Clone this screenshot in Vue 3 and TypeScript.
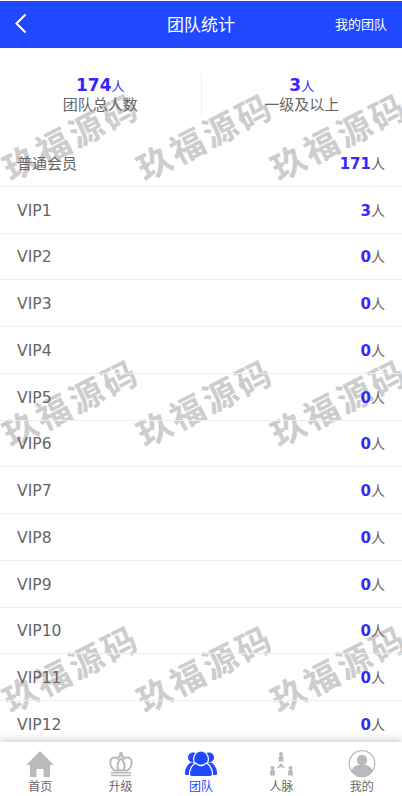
<template>
  <div class="page">
    <header class="top">
      <svg class="back" width="14" height="22" viewBox="0 0 14 22"><path d="M11.5 1.5 L2.5 10.5 L11.5 19.5" fill="none" stroke="#fff" stroke-width="2" /></svg>
      <span class="title">团队统计</span>
      <span class="link">我的团队</span>
    </header>

    <main class="body">
      <div class="marks">
        <span v-for="n in 9" :key="n" class="mark">玖福源码</span>
      </div>

      <section class="summary">
        <div class="cell">
          <div class="num"><b>174</b><i>人</i></div>
          <p>团队总人数</p>
        </div>
        <div class="cell">
          <div class="num"><b>3</b><i>人</i></div>
          <p>一级及以上</p>
        </div>
      </section>

      <ul class="rows">
        <li v-for="row in rows" :key="row.name">
          <span :class="{ vip: row.name.startsWith('VIP') }">{{ row.name }}</span>
          <span><b>{{ row.count }}</b><i>人</i></span>
        </li>
      </ul>
    </main>

    <nav class="tabs">
      <a v-for="tab in tabs" :key="tab.name" :class="{ on: tab.name === '团队' }">
        <svg width="42" height="32" viewBox="0 0 42 32" v-html="tab.icon"></svg>
        <span>{{ tab.name }}</span>
      </a>
    </nav>
  </div>
</template>

<script setup lang="ts">
const rows = [
  { name: "普通会员", count: 171 },
  { name: "VIP1", count: 3 },
  ...Array.from({ length: 11 }, (_, i) => ({ name: `VIP${i + 2}`, count: 0 })),
];

const person = (x: number, y: number) =>
  `<circle cx="${x}" cy="${y}" r="2"/><path d="M${x - 2.4} ${y + 7.5}v-4q0-1.6 1.6-1.6h1.6q1.6 0 1.6 1.6v4z"/>`;

const tabs = [
  {
    name: "首页",
    icon: `<path fill="#b9b9b9" d="M21 2 L34 15 L34 16 L31 16 L31 28 L24.5 28 L24.5 20 L17.5 20 L17.5 28 L11 28 L11 16 L8 16 L8 15 Z"/>`,
  },
  {
    name: "升级",
    icon: `<g fill="none" stroke="#b9b9b9" stroke-width="2"><path d="M14.5 21.5 C9 17 9 9.5 14 8.5 C16 8.2 17.5 9 18 9.5 C19 7.5 20 6.5 21 6 C22 6.5 23 7.5 24 9.5 C24.5 9 26 8.2 28 8.5 C33 9.5 33 17 27.5 21.5 Z"/><path d="M21 9.5 C17 12.5 17 18 18.5 21.5 M21 9.5 C25 12.5 25 18 23.5 21.5"/></g><circle cx="21" cy="4.6" r="1.9" fill="#b9b9b9"/><path fill="#b9b9b9" d="M11 23h20v1.5H11zM11 25.8h20v1.5H11z"/>`,
  },
  {
    name: "团队",
    icon: `<g fill="#2049ff"><circle cx="13" cy="8.5" r="5"/><path d="M6 26 Q4.5 26 5 23 Q6 16 11 13.5 L17 14 L14 26 Z"/><circle cx="29" cy="8.5" r="5"/><path d="M36 26 Q37.5 26 37 23 Q36 16 31 13.5 L25 14 L28 26 Z"/><g stroke="#fff" stroke-width="1.2"><ellipse cx="21" cy="10" rx="7.4" ry="8"/><path d="M12 27.5 Q9 27.5 9.5 24 Q10.5 17 15.5 14 Q21 19 26.5 14 Q31.5 17 32.5 24 Q33 27.5 30 27.5 Z"/></g></g>`,
  },
  {
    name: "人脉",
    icon: `<g fill="#b9b9b9">${person(21, 5)}${person(12.5, 19)}${person(30.5, 19)}<path d="M21 14 L25.5 19.5 L21 18 L16.5 19.5Z"/></g>`,
  },
  {
    name: "我的",
    icon: `<circle cx="21" cy="14.5" r="12.8" fill="none" stroke="#b9b9b9" stroke-width="1.3"/><circle cx="21" cy="11" r="5.2" fill="#b9b9b9"/><path fill="#b9b9b9" d="M10.5 22.5 q1-5.5 7-6.5 h7 q6 1 7 6.5 a12.2 12.2 0 0 1 -21 0z"/>`,
  },
];
</script>

<style scoped>
.page {
  width: 402px;
  height: 796px;
  display: flex;
  flex-direction: column;
  overflow: hidden;
  background: #fff;
  font-family: "DejaVu Sans", "Noto Sans CJK SC", sans-serif;
  color: #666;
}

.top {
  box-sizing: border-box;
  height: 47px;
  margin-top: 1px;
  flex: none;
  display: flex;
  align-items: center;
  justify-content: space-between;
  padding: 0 15px 2px 14px;
  background: #2049ff;
  color: #fff;
  position: relative;
}

.title {
  position: absolute;
  left: 0;
  right: 0;
  text-align: center;
  font-size: 17px;
}

.link {
  font-size: 13px;
  position: relative;
}

.body {
  flex: 1;
  min-height: 0;
  position: relative;
  overflow: hidden;
}

/* 水印 */
.marks {
  position: absolute;
  left: 3px;
  top: -46px;
  width: 402px;
  display: grid;
  grid-template-columns: repeat(3, 134px);
  grid-template-rows: repeat(3, 266px);
  pointer-events: none;
}

.mark {
  display: flex;
  align-items: center;
  justify-content: center;
  white-space: nowrap;
  font-size: 34px;
  font-weight: 700;
  letter-spacing: 3px;
  color: #cdcdcd;
  transform: rotate(-27deg);
}

.summary {
  position: relative;
  display: flex;
  padding-top: 25px;
}

.cell {
  box-sizing: border-box;
  flex: 1;
  height: 42px;
  text-align: center;
  font-size: 14px;
  line-height: 20px;
}

.cell + .cell {
  border-left: 1px solid #eee;
}

.cell .num {
  height: 20px;
  padding-top: 2px;
}

.cell p {
  margin: 0;
  font-size: 15px;
}

b {
  font-weight: 700;
  color: #3826ff;
}

.cell b {
  font-size: 17px;
}

i {
  font-style: normal;
}

.cell i {
  color: #3826ff;
  font-size: 13px;
}

.rows {
  position: relative;
  list-style: none;
  margin: 25px 0 0;
  padding: 0;
}

.rows li {
  height: 45.75px;
  border-bottom: 1px solid #eee;
  display: flex;
  align-items: center;
  justify-content: space-between;
  padding: 0 17px;
  font-size: 15px;
}

.rows .vip {
  font-size: 15.6px;
  padding-top: 2px;
}

.rows b {
  font-size: 15px;
}

.rows i {
  font-size: 14px;
}

.tabs {
  flex: none;
  height: 54px;
  position: relative;
  display: flex;
  background: #fff;
  box-shadow: 0 -2px 8px rgba(0, 0, 0, 0.2);
}

.tabs a {
  flex: 1;
  display: flex;
  flex-direction: column;
  align-items: center;
  padding-top: 7px;
  font-size: 12px;
  line-height: 14px;
}

.tabs svg {
  margin-bottom: -1px;
}

.tabs a.on {
  color: #2049ff;
}
</style>
